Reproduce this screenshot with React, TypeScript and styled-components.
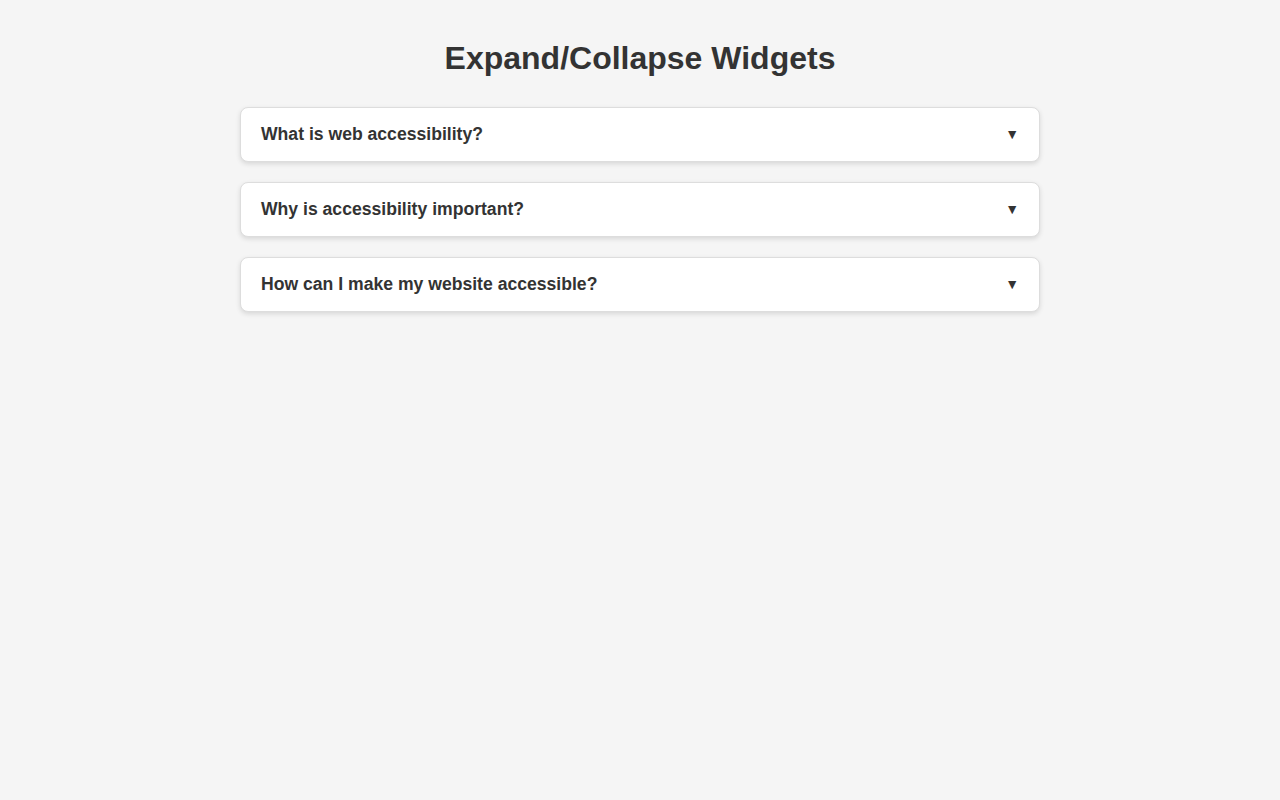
import { useState } from 'react'
import styled, { createGlobalStyle } from 'styled-components'

const GlobalStyle = createGlobalStyle`
  body {
    margin: 0;
    padding: 20px;
    background: #f5f5f5;
    color: #333;
    font-family: "Liberation Sans", Arial, sans-serif;
  }
`

const items = [
  {
    q: 'What is web accessibility?',
    a: 'Web accessibility means that websites, tools, and technologies are designed and developed so that people with disabilities can use them.',
  },
  {
    q: 'Why is accessibility important?',
    a: 'Accessibility is essential for developers and organizations that want to create high-quality websites and web tools, and not exclude people from using their products and services.',
  },
  {
    q: 'How can I make my website accessible?',
    a: 'Use semantic HTML, provide text alternatives for images, ensure keyboard navigation, and maintain sufficient color contrast.',
  },
]

const App = () => {
  const [open, setOpen] = useState<number | null>(null)

  return (
    <Container>
      <GlobalStyle />
      <Title>Expand/Collapse Widgets</Title>
      {items.map((item, i) => (
        <Card key={item.q}>
          <Header
            aria-expanded={open === i}
            onClick={() => setOpen(open === i ? null : i)}
          >
            <span>{item.q}</span>
            <Arrow $open={open === i}>▼</Arrow>
          </Header>
          {open === i && <Body>{item.a}</Body>}
        </Card>
      ))}
    </Container>
  )
}

const Container = styled.div`
  max-width: 800px;
  margin: 0 auto;
`

const Title = styled.h1`
  text-align: center;
  font-size: 32px;
  margin: 20px 0 30px;
  color: #333;
`

const Card = styled.div`
  background: #fff;
  border: 1px solid #ddd;
  border-radius: 8px;
  margin-bottom: 20px;
  box-shadow: 0 2px 5px rgba(0, 0, 0, 0.12);
  overflow: hidden;
`

const Header = styled.button`
  width: 100%;
  display: flex;
  justify-content: space-between;
  align-items: center;
  padding: 16px 20px;
  background: none;
  border: none;
  font-family: inherit;
  font-size: 17.6px;
  font-weight: bold;
  line-height: 21px;
  color: #333;
  text-align: left;
  cursor: pointer;
`

const Arrow = styled.span<{ $open: boolean }>`
  font-size: 14px;
  transform: rotate(${(p) => (p.$open ? '180deg' : '0deg')});
`

const Body = styled.div`
  padding: 0 20px 16px;
  font-size: 16px;
  line-height: 1.5;
`

export default App
